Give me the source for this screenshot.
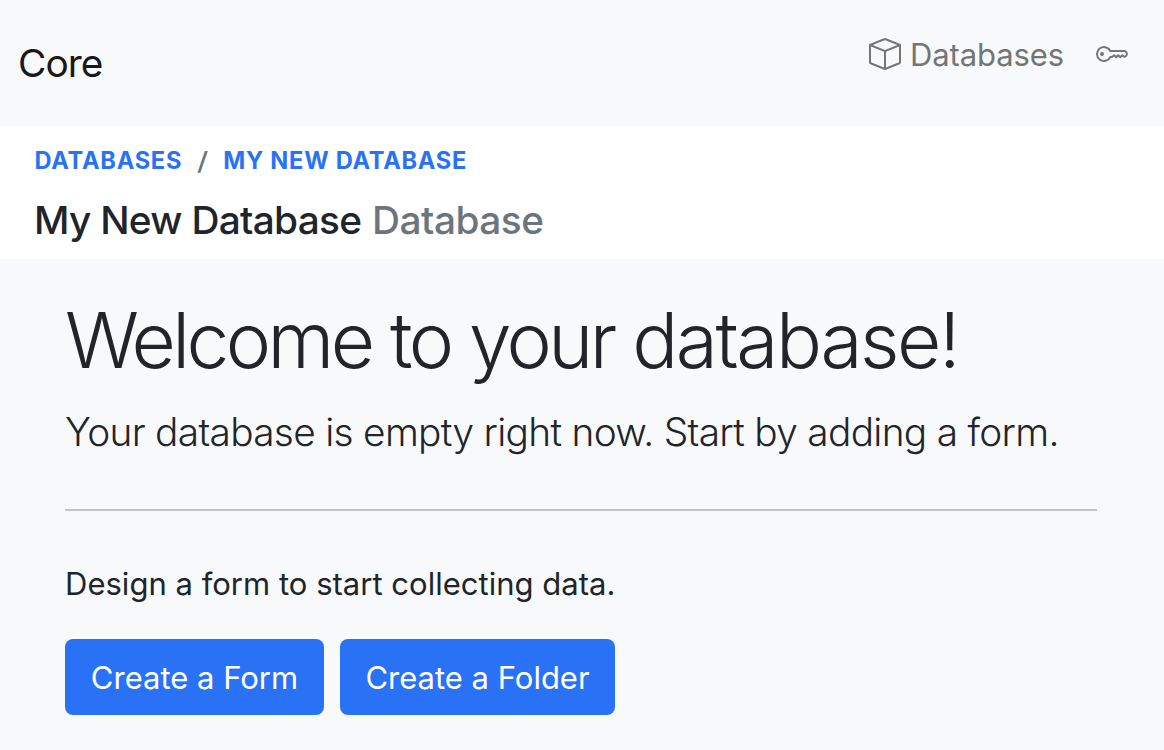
<main>
  <nav>
    <a class="brand" href="#home">Core</a>
    <div class="links">
      <a href="#databases">
        <svg width="32" height="32" viewBox="0 0 16 16" fill="currentColor"><path d="M8.186 1.113a.5.5 0 0 0-.372 0L1.846 3.5 8 5.961 14.154 3.5 8.186 1.113zM15 4.239l-6.5 2.6v7.922l6.5-2.6V4.24zM7.5 14.762V6.838L1 4.239v7.923l6.5 2.6zM7.443.184a1.5 1.5 0 0 1 1.114 0l7.129 2.852A.5.5 0 0 1 16 3.5v8.662a1 1 0 0 1-.629.928l-7.185 2.874a.5.5 0 0 1-.372 0L.63 13.09a1 1 0 0 1-.63-.928V3.5a.5.5 0 0 1 .314-.464L7.443.184z"/></svg>
        <span class="dbs">Databases</span>
      </a>
      <a href="#key" aria-label="Key">
        <svg width="32" height="32" viewBox="0 0 16 16" fill="none" stroke="currentColor" stroke-linejoin="round"><path d="M7.16 6.5H14.2Q14.6 6.5 14.9 6.8L15.25 7.4Q15.6 8 15.25 8.6L14.9 9.1Q14.4 9.5 13.9 9.2L13.2 8.6L12.1 9.6L11.1 8.6L10.1 9.6L9.1 8.6L8 9.5H7.16A3.5 3.5 0 1 1 7.16 6.5Z"/><circle cx="3" cy="8" r="1" fill="currentColor" stroke="none"/></svg>
      </a>
    </div>
  </nav>
  <header>
    <div class="crumbs"><a href="#databases">Databases</a><i>/</i><a href="#mine">My New Database</a></div>
    <h5>My New Database <small>Database</small></h5>
  </header>
  <section>
    <h1>Welcome to your <span>database!</span></h1>
    <p class="lead">Your database is empty right now. Start by adding a form.</p>
    <hr />
    <p class="hint">Design a form to start collecting data.</p>
    <div class="buttons"><button>Create a Form</button><button class="folder">Create a Folder</button></div>
  </section>
</main>

<style>
  :global(body) { margin: 0; background: #f8f9fb; }
  main { height: 750px; overflow: hidden; background: #f8f9fb; color: #212529; font-family: Inter, sans-serif; font-size: 31px; box-sizing: border-box; }
  a { text-decoration: none; color: inherit; }
  nav { display: flex; justify-content: space-between; height: 126px; box-sizing: border-box; padding: 0 36px 0 18px; }
  .brand { font-size: 38.8px; line-height: 60px; padding-top: 33px; letter-spacing: -0.9px; color: #191919; }
  .links { display: flex; gap: 32px; padding-top: 30px; height: 48px; color: #747575; }
  .links a { display: flex; align-items: center; gap: 9px; }
  .dbs { letter-spacing: -0.1px; line-height: 44px; padding-top: 1px; }
  header { height: 133px; box-sizing: border-box; background: #fff; padding: 17px 34px 0; }
  .crumbs { display: flex; font-size: 23.6px; line-height: 36px; font-weight: 650; color: #2a72f5; text-transform: uppercase; letter-spacing: 0.74px; padding-left: 0.5px; }
  i { color: #6c757d; font-style: normal; font-size: 25px; font-weight: 600; padding: 0 15px 0 16px; transform: skewX(-4deg); }
  h5 { margin: 17px 0 0; font-size: 38.8px; line-height: 48px; font-weight: 490; white-space: nowrap; letter-spacing: -0.7px; }
  small { font-size: inherit; color: #6c757d; letter-spacing: -0.5px; margin-left: 1px; }
  section { padding: 33px 67px 0 65px; white-space: nowrap; }
  h1 { margin: 0; font-size: 76.5px; font-weight: 360; line-height: 96px; letter-spacing: -3.55px; word-spacing: 0.5px; }
  h1 span { letter-spacing: -2.4px; }
  .lead { margin: 14px 0 0; font-size: 38.8px; font-weight: 330; line-height: 60px; letter-spacing: -0.69px; }
  hr { margin: 47px 0 49px; border: 0; height: 2px; background: #c4c5c7; }
  .hint { margin: 0; line-height: 48px; letter-spacing: 0.02px; }
  .buttons { display: flex; gap: 16px; margin-top: 31px; }
  button { width: 259px; height: 76px; border: 0; border-radius: 8px; padding: 1px 0 0; background: #2a72f5; color: white; font: 400 31px/48px Inter, sans-serif; }
  .folder { width: 275px; }
</style>
